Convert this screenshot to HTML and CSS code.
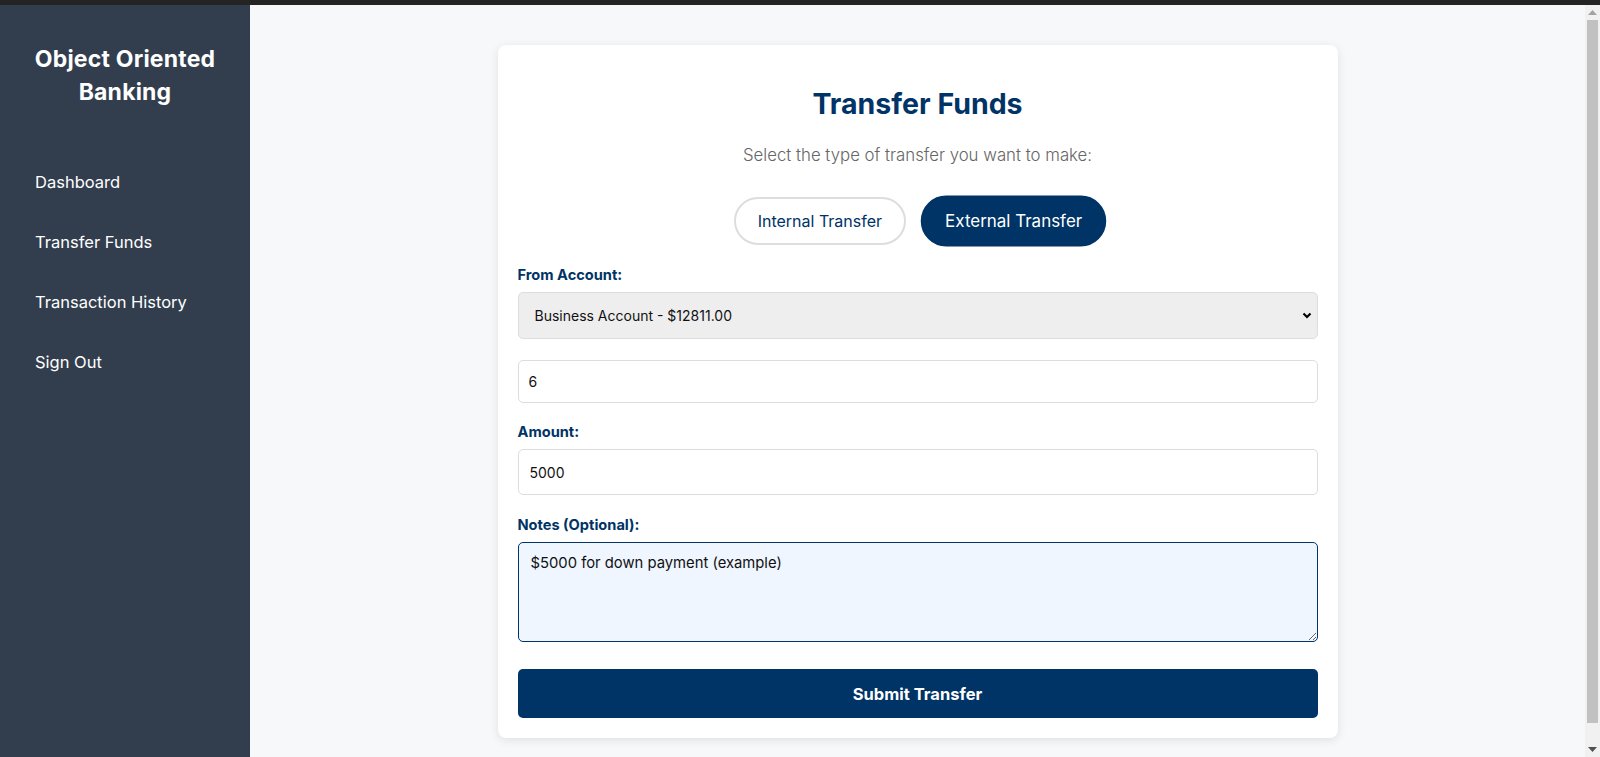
FILE: index.html
```html
<!DOCTYPE html>
<html lang="en">
<head>
<meta charset="utf-8">
<title>Transfer Funds - Object Oriented Banking</title>
<link rel="stylesheet" href="styles.css">
</head>
<body>
<div class="chrome-strip"></div>
<div class="viewport">
  <div class="scroll-area">
    <div class="layout">
      <aside class="sidebar">
        <h1 class="brand">Object Oriented Banking</h1>
        <nav class="nav">
          <a class="nav-link" href="#">Dashboard</a>
          <a class="nav-link" href="#">Transfer Funds</a>
          <a class="nav-link" href="#">Transaction History</a>
          <a class="nav-link" href="#">Sign Out</a>
        </nav>
      </aside>
      <main class="main">
        <section class="card">
          <h2 class="card-title">Transfer Funds</h2>
          <p class="card-subtitle">Select the type of transfer you want to make:</p>
          <div class="type-toggle">
            <button class="type-btn" type="button">Internal Transfer</button>
            <button class="type-btn is-active" type="button">External Transfer</button>
          </div>
          <form class="form">
            <label class="field-label">From Account:</label>
            <select class="field-select">
              <option>Business Account - $12811.00</option>
            </select>
            <input class="field-input field-input--compact" type="text" value="6">
            <label class="field-label field-label--spaced">Amount:</label>
            <input class="field-input" type="text" value="5000">
            <label class="field-label">Notes (Optional):</label>
            <textarea class="field-textarea">$5000 for down payment (example)</textarea>
            <button class="submit-btn" type="button">Submit Transfer</button>
          </form>
        </section>
      </main>
    </div>
  </div>
  <div class="scrollbar" aria-hidden="true">
    <div class="sb-btn">
      <svg width="9" height="5" viewBox="0 0 9 5"><polygon points="0,5 9,5 4.5,0" fill="#a3a3a3"/></svg>
    </div>
    <div class="sb-track"><div class="sb-thumb"></div></div>
    <div class="sb-btn">
      <svg width="9" height="5" viewBox="0 0 9 5"><polygon points="0,0 9,0 4.5,5" fill="#505050"/></svg>
    </div>
  </div>
</div>
</body>
</html>
```
FILE: styles.css
```css
* {
  box-sizing: border-box;
}

html, body {
  margin: 0;
  padding: 0;
  height: 100%;
}

body {
  font-family: Inter, "Open Sans", "Liberation Sans", sans-serif;
  overflow: hidden;
  background: #f7f8fa;
  color: #222;
}

.chrome-strip {
  height: 5px;
  background: #242424;
}

.viewport {
  display: flex;
  height: calc(100vh - 5px);
}

.scroll-area {
  flex: 1;
  min-width: 0;
  overflow: hidden;
}

.scrollbar {
  width: 15px;
  flex-shrink: 0;
  background: #f1f1f1;
  display: flex;
  flex-direction: column;
}

.sb-btn {
  height: 15px;
  display: flex;
  align-items: center;
  justify-content: center;
}

.sb-track {
  flex: 1;
  padding: 0 2px;
}

.sb-thumb {
  height: 703px;
  background: #c1c1c1;
}

.layout {
  display: flex;
  min-height: 100%;
}

.sidebar {
  width: 250px;
  flex-shrink: 0;
  background: #323e4e;
  padding: 20px;
  color: #fff;
}

.brand {
  margin: 18px 0 0;
  font-size: 23px;
  line-height: 33px;
  font-weight: 700;
  text-align: center;
  letter-spacing: 0.2px;
}

.nav {
  display: flex;
  flex-direction: column;
  margin-top: 43px;
}

.nav-link {
  color: #fff;
  text-decoration: none;
  font-size: 16.5px;
  line-height: 24px;
  padding: 18px 15px;
}

.main {
  flex: 1;
  padding: 40px;
  display: flex;
  justify-content: center;
  align-items: flex-start;
}

.card {
  width: 840px;
  background: #fff;
  border-radius: 8px;
  box-shadow: 0 2px 10px rgba(0, 0, 0, 0.1);
  padding: 20px;
}

.card-title {
  margin: 22px 0 0;
  font-size: 28.5px;
  line-height: 34px;
  font-weight: 700;
  color: #003366;
  text-align: center;
}

.card-subtitle {
  margin: 22px 0 0;
  font-size: 16.8px;
  line-height: 24px;
  font-weight: 300;
  color: #666;
  text-align: center;
}

.type-toggle {
  margin-top: 30px;
  display: flex;
  justify-content: center;
  gap: 20px;
}

.type-btn {
  height: 48px;
  padding: 0 22px;
  border: 2px solid #ddd;
  border-radius: 24px;
  background: #fff;
  color: #003366;
  font-family: inherit;
  font-size: 16px;
  cursor: pointer;
}

.type-btn.is-active {
  background: #003366;
  border-color: #003366;
  color: #fff;
  padding: 0 21px;
  transform: scale(1.06);
}

.form {
  margin-top: 20px;
  display: flex;
  flex-direction: column;
}

.field-label {
  font-size: 14.6px;
  line-height: 21px;
  font-weight: 700;
  color: #003366;
  margin-top: 20px;
}

.form > .field-label:first-child {
  margin-top: 0;
}

.field-label--spaced {
  margin-top: 19px;
}

.field-select,
.field-input,
.field-textarea {
  font-family: inherit;
  font-size: 14px;
  color: #111;
  border: 1px solid #ddd;
  border-radius: 5px;
  width: 100%;
  margin-top: 6px;
}

.field-select {
  height: 47px;
  padding: 0 24px 0 16px;
  background: #eeeeee url("data:image/svg+xml;utf8,<svg xmlns='http://www.w3.org/2000/svg' width='10' height='7' viewBox='0 0 10 7'><polyline points='1.5,1.5 5,5 8.5,1.5' fill='none' stroke='black' stroke-width='2.2'/></svg>") no-repeat right 5px center;
  background-size: 10px 7px;
  appearance: none;
  -webkit-appearance: none;
}

.field-input {
  height: 46px;
  padding: 0 11px;
  background: #fff;
}

.field-input--compact {
  height: 43px;
  margin-top: 21px;
  padding: 0 10px;
}

.field-textarea {
  height: 100px;
  padding: 10px 12px;
  font-size: 14.8px;
  line-height: 21px;
  background: #eff6ff;
  border-color: #003366;
  resize: vertical;
}

.submit-btn {
  margin-top: 27px;
  height: 49px;
  border: none;
  border-radius: 5px;
  background: #003366;
  color: #fff;
  font-family: inherit;
  font-size: 16.5px;
  font-weight: 700;
  cursor: pointer;
}
```
